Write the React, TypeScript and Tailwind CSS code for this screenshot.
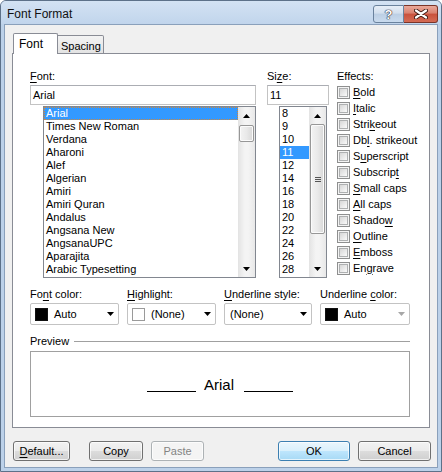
import type { ReactNode } from 'react'

const fontNames = [
  'Arial',
  'Times New Roman',
  'Verdana',
  'Aharoni',
  'Alef',
  'Algerian',
  'Amiri',
  'Amiri Quran',
  'Andalus',
  'Angsana New',
  'AngsanaUPC',
  'Aparajita',
  'Arabic Typesetting',
]

const sizes = ['8', '9', '10', '11', '12', '14', '16', '18', '20', '22', '24', '26', '28']

// label, index of the access-key letter
const effects: [string, number][] = [
  ['Bold', 0],
  ['Italic', 0],
  ['Strikeout', 4],
  ['Dbl. strikeout', 2],
  ['Superscript', 1],
  ['Subscript', 8],
  ['Small caps', 0],
  ['All caps', 0],
  ['Shadow', 5],
  ['Outline', 0],
  ['Emboss', 0],
  ['Engrave', 2],
]

function Key({ text, u }: { text: string; u: number }) {
  return (
    <span className="whitespace-pre">
      {text.slice(0, u)}
      <u className="underline-offset-[2px]">{text[u]}</u>
      {text.slice(u + 1)}
    </span>
  )
}

function Tri({ up, gray }: { up?: boolean; gray?: boolean }) {
  return (
    <svg width="7" height="4" viewBox="0 0 7 4" className="block">
      <path d={up ? 'M0 4H7L3.5 0Z' : 'M0 0H7L3.5 4Z'} fill={gray ? '#a7a7a7' : '#000'} />
    </svg>
  )
}

function ScrollBar({ gapClass, thumbClass, grip }: { gapClass: string; thumbClass: string; grip?: boolean }) {
  return (
    <div className="flex w-[17px] flex-col bg-[linear-gradient(90deg,#e3e3e3,#f4f4f4_40%,#f4f4f4_60%,#e8e8e8)]">
      <div className="flex h-[17px] shrink-0 items-center justify-center">
        <Tri up />
      </div>
      <div className={gapClass} />
      <div
        className={`${thumbClass} mx-[1px] flex shrink-0 items-center justify-center rounded-[2px] border border-[#979797] bg-[linear-gradient(90deg,#f3f3f3,#e9e9e9_50%,#d8d8d8)] shadow-[inset_0_0_0_1px_#fbfbfb]`}
      >
        {grip && (
          <div className="flex w-[6px] flex-col gap-[1px]">
            <div className="h-[1px] bg-[#555]" />
            <div className="h-[1px] bg-[#555]" />
            <div className="h-[1px] bg-[#555]" />
          </div>
        )}
      </div>
      <div className="flex-1" />
      <div className="flex h-[17px] shrink-0 items-center justify-center">
        <Tri />
      </div>
    </div>
  )
}

function Checkbox() {
  return (
    <div className="h-[13px] w-[13px] shrink-0 border border-[#8e8f8f] bg-[#f4f4f4] p-[1px]">
      <div className="h-full w-full border border-[#aeb0b1] bg-[linear-gradient(135deg,#d6d6d6,#fafafa)]" />
    </div>
  )
}

function Combo({ children, gray }: { children: ReactNode; gray?: boolean }) {
  return (
    <div className="flex h-[22px] items-center rounded-[2px] border border-[#c3c3c3] bg-white px-[4px]">
      <div className="flex flex-1 items-center gap-[6px]">{children}</div>
      <Tri gray={gray} />
    </div>
  )
}

function Swatch({ white }: { white?: boolean }) {
  return (
    <div
      className={
        white
          ? 'h-[13px] w-[13px] border border-[#9a9a9a] bg-white'
          : 'h-[13px] w-[13px] border border-[#111] bg-black'
      }
    />
  )
}

function Button({ children, kind, className }: { children: ReactNode; kind?: 'default' | 'disabled'; className: string }) {
  const look =
    kind === 'default'
      ? 'border-[#3c7fb1] bg-[linear-gradient(#eaf6fd,#d9f0fc_50%,#bee6fd_50%,#a7d9f5)] text-black'
      : kind === 'disabled'
        ? 'border-[#adb2b5] bg-[#f4f4f4] text-[#838383]'
        : 'border-[#707070] bg-[linear-gradient(#f2f2f2,#ebebeb_50%,#dddddd_50%,#cfcfcf)] text-black'
  return (
    <div
      className={`${className} ${look} flex h-[20px] items-center justify-center rounded-[3px] border shadow-[inset_0_0_0_1px_rgba(255,255,255,0.7)]`}
    >
      {children}
    </div>
  )
}

export default function App() {
  return (
    <div className="flex h-[472px] w-[442px] flex-col rounded-t-[6px] border border-[#5d7189] bg-[#bcd1e9] font-['Liberation_Sans',Arial,sans-serif] text-[11px] leading-[13px] text-black">
      {/* title bar */}
      <div className="flex h-[23px] shrink-0 rounded-t-[5px] bg-[linear-gradient(#d3e2f3,#c1d5ec)]">
        <div className="pl-[6px] pt-[5px] text-[12px] leading-[16px] text-[#111]">Font Format</div>
        <div className="ml-auto mr-[3px] mt-[4px] flex">
          <div className="flex h-[18px] w-[31px] items-center justify-center rounded-l-[3px] border border-[#6a829d] bg-[linear-gradient(#e6eef7,#d2dfee_45%,#bccfe4_50%,#c9dbee)]">
            <span className="text-[13px] font-bold leading-[13px] text-white [text-shadow:0_0_1px_#223,0_0_1px_#223,0_0_1px_#223]">
              ?
            </span>
          </div>
          <div className="flex h-[18px] w-[34px] items-center justify-center rounded-r-[3px] border border-l-0 border-[#7a3428] bg-[linear-gradient(#e9a99b,#d9806e_45%,#c9513c_50%,#d46b54)]">
            <svg width="14" height="10" viewBox="0 0 14 10">
              <path d="M2 1.5L12 8.5M12 1.5L2 8.5" stroke="#3b1711" strokeWidth="4" strokeLinecap="round" />
              <path d="M2 1.5L12 8.5M12 1.5L2 8.5" stroke="#fff" strokeWidth="2.2" strokeLinecap="round" />
            </svg>
          </div>
        </div>
      </div>

      {/* client area */}
      <div className="mx-[3px] mb-[3px] flex flex-1 flex-col border border-[#8aa0bb] bg-[#f0f0f0] px-[7px] pt-[8px]">
        {/* tabs */}
        <div className="relative z-10 -mb-[1px] flex h-[21px] items-end pl-[1px]">
          <div className="flex h-[21px] w-[45px] items-start rounded-t-[2px] border border-b-0 border-[#898c95] bg-white pl-[5px] pt-[4px] text-[12px]">
            Font
          </div>
          <div className="flex h-[19px] w-[46px] items-start rounded-tr-[2px] border border-l-0 border-[#898c95] bg-[linear-gradient(#f3f3f3,#e3e3e3)] pl-[3px] pt-[4px]">
            Spacing
          </div>
        </div>

        {/* tab panel */}
        <div className="flex h-[375px] flex-col border border-[#898c95] bg-white pl-[17px] pt-[16px]">
          <div className="flex">
            {/* font column */}
            <div className="flex w-[226px] flex-col">
              <Key text="Font:" u={0} />
              <div className="mt-[2px] flex h-[20px] items-center border border-[#c3c3c3] border-t-[#abadb3] pl-[2px]">
                Arial
              </div>
              <div className="ml-[13px] mt-[1px] flex h-[172px] border border-[#828790]">
                <div className="flex flex-1 flex-col">
                  {fontNames.map((n, i) => (
                    <div
                      key={n}
                      className={
                        i === 0
                          ? 'flex h-[13px] items-center border border-dotted border-[#d0873c] bg-[#3399ff] pl-[1px] text-white'
                          : 'flex h-[13px] items-center pl-[2px]'
                      }
                    >
                      {n}
                    </div>
                  ))}
                </div>
                <ScrollBar gapClass="h-[1px] shrink-0" thumbClass="h-[17px]" />
              </div>
            </div>

            {/* size column */}
            <div className="ml-[11px] flex w-[62px] flex-col">
              <Key text="Size:" u={2} />
              <div className="mt-[2px] flex h-[20px] items-center border border-[#c3c3c3] border-t-[#abadb3] pl-[2px]">
                11
              </div>
              <div className="ml-[12px] mr-[2px] mt-[1px] flex h-[172px] border border-[#828790]">
                <div className="flex flex-1 flex-col">
                  {sizes.map((s) => (
                    <div
                      key={s}
                      className={
                        s === '11'
                          ? 'flex h-[13px] items-center bg-[#3399ff] pl-[2px] text-white'
                          : 'flex h-[13px] items-center pl-[2px]'
                      }
                    >
                      {s}
                    </div>
                  ))}
                </div>
                <ScrollBar gapClass="h-0 shrink-0" thumbClass="h-[110px]" grip />
              </div>
            </div>

            {/* effects */}
            <div className="ml-[8px] flex flex-col">
              <span>Effects:</span>
              <div className="mt-[1px] flex flex-col">
                {effects.map(([t, u]) => (
                  <div key={t} className="flex h-[16px] items-center gap-[3px]">
                    <Checkbox />
                    <Key text={t} u={u} />
                  </div>
                ))}
              </div>
            </div>
          </div>

          {/* colour / underline row */}
          <div className="mt-[10px] flex gap-[8px]">
            <div className="flex w-[89px] flex-col gap-[2px]">
              <Key text="Font color:" u={2} />
              <Combo>
                <Swatch />
                <span>Auto</span>
              </Combo>
            </div>
            <div className="flex w-[89px] flex-col gap-[2px]">
              <Key text="Highlight:" u={0} />
              <Combo>
                <Swatch white />
                <span>(None)</span>
              </Combo>
            </div>
            <div className="flex w-[88px] flex-col gap-[2px]">
              <Key text="Underline style:" u={0} />
              <Combo>
                <span className="pl-[1px]">(None)</span>
              </Combo>
            </div>
            <div className="flex w-[90px] flex-col gap-[2px]">
              <Key text="Underline color:" u={10} />
              <Combo gray>
                <Swatch />
                <span>Auto</span>
              </Combo>
            </div>
          </div>

          {/* preview */}
          <div className="mt-[10px] flex w-[380px] items-center gap-[5px]">
            <span>Preview</span>
            <div className="h-[1px] flex-1 bg-[#a0a0a0]" />
          </div>
          <div className="mt-[3px] flex h-[66px] w-[380px] items-center justify-center border border-[#a0a0a0]">
            <div className="mt-[14px] h-[1px] w-[49px] bg-black" />
            <span className="ml-[8px] font-['Liberation_Sans',Arial,sans-serif] text-[15px] leading-[17px]">Arial</span>
            <div className="ml-[10px] mt-[14px] h-[1px] w-[49px] bg-black" />
          </div>
        </div>

        {/* buttons */}
        <div className="mt-[13px] flex">
          <Button className="ml-[1px] w-[57px]">
            <Key text="Default..." u={0} />
          </Button>
          <Button className="ml-[19px] w-[54px]">Copy</Button>
          <Button className="ml-[8px] w-[53px]" kind="disabled">
            Paste
          </Button>
          <div className="flex-1" />
          <Button className="w-[72px]" kind="default">
            OK
          </Button>
          <Button className="ml-[8px] -mr-[1px] w-[73px]">Cancel</Button>
        </div>
      </div>
    </div>
  )
}
